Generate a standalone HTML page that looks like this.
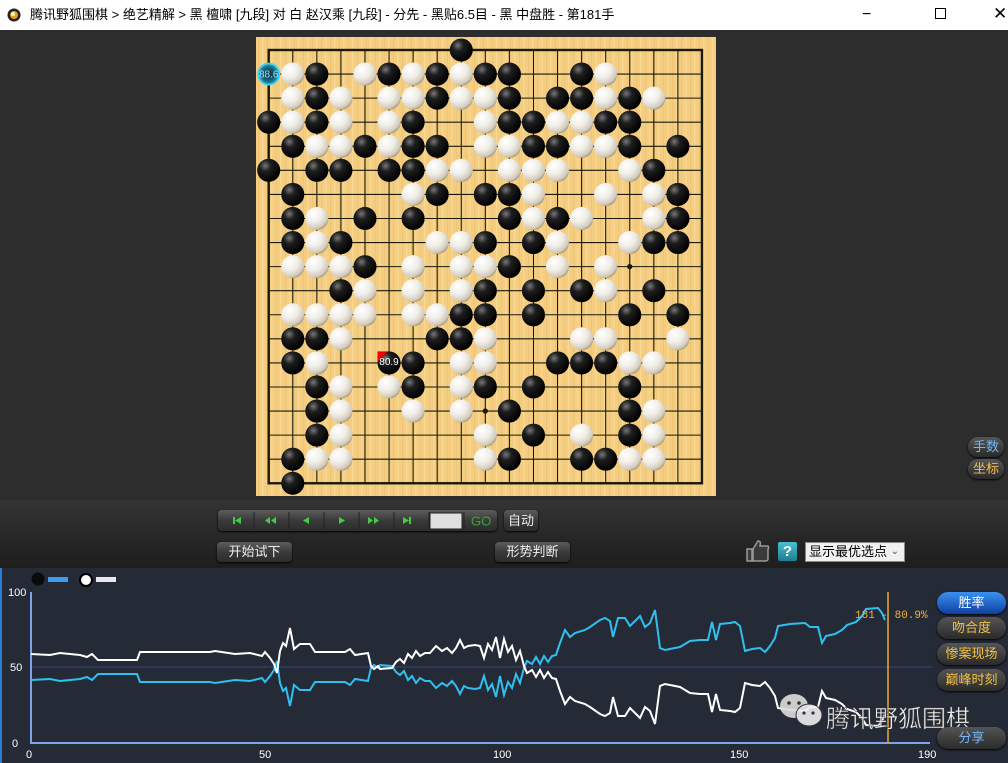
<!DOCTYPE html>
<html><head><meta charset="utf-8"><style>
*{margin:0;padding:0;box-sizing:border-box}
body{width:1008px;height:763px;overflow:hidden;background:#2c2c2c;font-family:"Liberation Sans","Noto Sans CJK SC",sans-serif;position:relative}
.abs{position:absolute}
#title{left:0;top:0;width:1008px;height:30px;background:#fff;font-size:13px;color:#000;line-height:30px}
#main{left:0;top:30px;width:1008px;height:470px;background:#2d2d2d}
#ctrl{left:0;top:500px;width:1008px;height:68px;background:linear-gradient(#343434,#262626 60%,#1e1e1e)}
#chart{left:0;top:568px;width:1008px;height:195px;background:#252a37;border-left:2px solid #2b7fd0}
.btn{position:absolute;background:linear-gradient(#5c5c5c,#3a3a3a 50%,#2c2c2c);border-radius:4px;color:#eee;font-size:13px;text-align:center;box-shadow:0 1px 2px #000}
.rb{position:absolute;border-radius:11px;background:linear-gradient(#555,#2a2a2a);font-size:13px;text-align:center;box-shadow:0 1px 2px #000;color:#f5c243}
</style></head><body>
<div id="title" class="abs">
<svg class="abs" style="left:7px;top:8px" width="14" height="14"><circle cx="7" cy="7" r="6.5" fill="#222"/><circle cx="7" cy="7" r="4" fill="#e8a020"/><circle cx="6" cy="6" r="2" fill="#fff3b0"/></svg>
<span class="abs" style="left:30px;top:0">腾讯野狐围棋 &gt; 绝艺精解 &gt; 黑 檀啸 [九段] 对 白 赵汉乘 [九段] - 分先 - 黑贴6.5目 - 黑 中盘胜 - 第181手</span>
<span class="abs" style="left:862px;top:0;font-size:16px">−</span>
<span class="abs" style="left:935px;top:8px;width:11px;height:11px;border:1px solid #000"></span>
<span class="abs" style="left:993px;top:-1px;font-size:17px">✕</span>
</div>
<div id="main" class="abs"></div>

<svg class="abs" style="left:256px;top:37px" width="460" height="459">
<defs>
<radialGradient id="bk" cx="0.35" cy="0.3" r="0.7"><stop offset="0" stop-color="#777"/><stop offset="0.35" stop-color="#1e1e1e"/><stop offset="1" stop-color="#000"/></radialGradient>
<radialGradient id="wh" cx="0.35" cy="0.3" r="0.75"><stop offset="0" stop-color="#fff"/><stop offset="0.5" stop-color="#f0ede6"/><stop offset="0.85" stop-color="#d2cabb"/><stop offset="1" stop-color="#9d927c"/></radialGradient>
<radialGradient id="mk" cx="0.5" cy="0.5" r="0.5"><stop offset="0" stop-color="#123"/><stop offset="0.7" stop-color="#1b6d80"/><stop offset="1" stop-color="#3ad"/></radialGradient>
<pattern id="wood" width="9" height="10" patternUnits="userSpaceOnUse"><rect width="9" height="10" fill="#f4cd80"/><rect x="2" width="1" height="10" fill="#eec476"/><rect x="6" width="1.5" height="10" fill="#f8d792"/></pattern>
</defs>
<rect width="460" height="459" fill="url(#wood)"/>
<g transform="translate(12.7,13) scale(24.07)">
<g stroke="#1a1a0a" stroke-width="0.045">
<path d="M0 1H18M0 2H18M0 3H18M0 4H18M0 5H18M0 6H18M0 7H18M0 8H18M0 9H18M0 10H18M0 11H18M0 12H18M0 13H18M0 14H18M0 15H18M0 16H18M0 17H18M1 0V18M2 0V18M3 0V18M4 0V18M5 0V18M6 0V18M7 0V18M8 0V18M9 0V18M10 0V18M11 0V18M12 0V18M13 0V18M14 0V18M15 0V18M16 0V18M17 0V18"/>
<rect x="0" y="0" width="18" height="18" fill="none" stroke-width="0.1"/>
</g>
<g fill="#1a1a0a"><circle cx="3" cy="3" r=".11"/><circle cx="9" cy="3" r=".11"/><circle cx="15" cy="3" r=".11"/><circle cx="3" cy="9" r=".11"/><circle cx="9" cy="9" r=".11"/><circle cx="15" cy="9" r=".11"/><circle cx="3" cy="15" r=".11"/><circle cx="9" cy="15" r=".11"/><circle cx="15" cy="15" r=".11"/></g>
<g fill="url(#bk)">
<circle cx="8" cy="0" r=".48"/>
<circle cx="2" cy="1" r=".48"/><circle cx="5" cy="1" r=".48"/><circle cx="7" cy="1" r=".48"/><circle cx="9" cy="1" r=".48"/><circle cx="10" cy="1" r=".48"/><circle cx="13" cy="1" r=".48"/>
<circle cx="2" cy="2" r=".48"/><circle cx="7" cy="2" r=".48"/><circle cx="10" cy="2" r=".48"/><circle cx="12" cy="2" r=".48"/><circle cx="13" cy="2" r=".48"/><circle cx="15" cy="2" r=".48"/>
<circle cx="0" cy="3" r=".48"/><circle cx="2" cy="3" r=".48"/><circle cx="6" cy="3" r=".48"/><circle cx="10" cy="3" r=".48"/><circle cx="11" cy="3" r=".48"/><circle cx="14" cy="3" r=".48"/><circle cx="15" cy="3" r=".48"/>
<circle cx="1" cy="4" r=".48"/><circle cx="4" cy="4" r=".48"/><circle cx="6" cy="4" r=".48"/><circle cx="7" cy="4" r=".48"/><circle cx="11" cy="4" r=".48"/><circle cx="12" cy="4" r=".48"/><circle cx="15" cy="4" r=".48"/><circle cx="17" cy="4" r=".48"/>
<circle cx="0" cy="5" r=".48"/><circle cx="2" cy="5" r=".48"/><circle cx="3" cy="5" r=".48"/><circle cx="5" cy="5" r=".48"/><circle cx="6" cy="5" r=".48"/><circle cx="16" cy="5" r=".48"/>
<circle cx="1" cy="6" r=".48"/><circle cx="7" cy="6" r=".48"/><circle cx="9" cy="6" r=".48"/><circle cx="10" cy="6" r=".48"/><circle cx="17" cy="6" r=".48"/>
<circle cx="1" cy="7" r=".48"/><circle cx="4" cy="7" r=".48"/><circle cx="6" cy="7" r=".48"/><circle cx="10" cy="7" r=".48"/><circle cx="12" cy="7" r=".48"/><circle cx="17" cy="7" r=".48"/>
<circle cx="1" cy="8" r=".48"/><circle cx="3" cy="8" r=".48"/><circle cx="9" cy="8" r=".48"/><circle cx="11" cy="8" r=".48"/><circle cx="16" cy="8" r=".48"/><circle cx="17" cy="8" r=".48"/>
<circle cx="4" cy="9" r=".48"/><circle cx="10" cy="9" r=".48"/>
<circle cx="3" cy="10" r=".48"/><circle cx="9" cy="10" r=".48"/><circle cx="11" cy="10" r=".48"/><circle cx="13" cy="10" r=".48"/><circle cx="16" cy="10" r=".48"/>
<circle cx="8" cy="11" r=".48"/><circle cx="9" cy="11" r=".48"/><circle cx="11" cy="11" r=".48"/><circle cx="15" cy="11" r=".48"/><circle cx="17" cy="11" r=".48"/>
<circle cx="1" cy="12" r=".48"/><circle cx="2" cy="12" r=".48"/><circle cx="7" cy="12" r=".48"/><circle cx="8" cy="12" r=".48"/>
<circle cx="1" cy="13" r=".48"/><circle cx="5" cy="13" r=".48"/><circle cx="6" cy="13" r=".48"/><circle cx="12" cy="13" r=".48"/><circle cx="13" cy="13" r=".48"/><circle cx="14" cy="13" r=".48"/>
<circle cx="2" cy="14" r=".48"/><circle cx="6" cy="14" r=".48"/><circle cx="9" cy="14" r=".48"/><circle cx="11" cy="14" r=".48"/><circle cx="15" cy="14" r=".48"/>
<circle cx="2" cy="15" r=".48"/><circle cx="10" cy="15" r=".48"/><circle cx="15" cy="15" r=".48"/>
<circle cx="2" cy="16" r=".48"/><circle cx="11" cy="16" r=".48"/><circle cx="15" cy="16" r=".48"/>
<circle cx="1" cy="17" r=".48"/><circle cx="10" cy="17" r=".48"/><circle cx="13" cy="17" r=".48"/><circle cx="14" cy="17" r=".48"/>
<circle cx="1" cy="18" r=".48"/>
</g>
<g fill="url(#wh)">
<circle cx="1" cy="1" r=".48"/><circle cx="4" cy="1" r=".48"/><circle cx="6" cy="1" r=".48"/><circle cx="8" cy="1" r=".48"/><circle cx="14" cy="1" r=".48"/>
<circle cx="1" cy="2" r=".48"/><circle cx="3" cy="2" r=".48"/><circle cx="5" cy="2" r=".48"/><circle cx="6" cy="2" r=".48"/><circle cx="8" cy="2" r=".48"/><circle cx="9" cy="2" r=".48"/><circle cx="14" cy="2" r=".48"/><circle cx="16" cy="2" r=".48"/>
<circle cx="1" cy="3" r=".48"/><circle cx="3" cy="3" r=".48"/><circle cx="5" cy="3" r=".48"/><circle cx="9" cy="3" r=".48"/><circle cx="12" cy="3" r=".48"/><circle cx="13" cy="3" r=".48"/>
<circle cx="2" cy="4" r=".48"/><circle cx="3" cy="4" r=".48"/><circle cx="5" cy="4" r=".48"/><circle cx="9" cy="4" r=".48"/><circle cx="10" cy="4" r=".48"/><circle cx="13" cy="4" r=".48"/><circle cx="14" cy="4" r=".48"/>
<circle cx="7" cy="5" r=".48"/><circle cx="8" cy="5" r=".48"/><circle cx="10" cy="5" r=".48"/><circle cx="11" cy="5" r=".48"/><circle cx="12" cy="5" r=".48"/><circle cx="15" cy="5" r=".48"/>
<circle cx="6" cy="6" r=".48"/><circle cx="11" cy="6" r=".48"/><circle cx="14" cy="6" r=".48"/><circle cx="16" cy="6" r=".48"/>
<circle cx="2" cy="7" r=".48"/><circle cx="11" cy="7" r=".48"/><circle cx="13" cy="7" r=".48"/><circle cx="16" cy="7" r=".48"/>
<circle cx="2" cy="8" r=".48"/><circle cx="7" cy="8" r=".48"/><circle cx="8" cy="8" r=".48"/><circle cx="12" cy="8" r=".48"/><circle cx="15" cy="8" r=".48"/>
<circle cx="1" cy="9" r=".48"/><circle cx="2" cy="9" r=".48"/><circle cx="3" cy="9" r=".48"/><circle cx="6" cy="9" r=".48"/><circle cx="8" cy="9" r=".48"/><circle cx="9" cy="9" r=".48"/><circle cx="12" cy="9" r=".48"/><circle cx="14" cy="9" r=".48"/>
<circle cx="4" cy="10" r=".48"/><circle cx="6" cy="10" r=".48"/><circle cx="8" cy="10" r=".48"/><circle cx="14" cy="10" r=".48"/>
<circle cx="1" cy="11" r=".48"/><circle cx="2" cy="11" r=".48"/><circle cx="3" cy="11" r=".48"/><circle cx="4" cy="11" r=".48"/><circle cx="6" cy="11" r=".48"/><circle cx="7" cy="11" r=".48"/>
<circle cx="3" cy="12" r=".48"/><circle cx="9" cy="12" r=".48"/><circle cx="13" cy="12" r=".48"/><circle cx="14" cy="12" r=".48"/><circle cx="17" cy="12" r=".48"/>
<circle cx="2" cy="13" r=".48"/><circle cx="8" cy="13" r=".48"/><circle cx="9" cy="13" r=".48"/><circle cx="15" cy="13" r=".48"/><circle cx="16" cy="13" r=".48"/>
<circle cx="3" cy="14" r=".48"/><circle cx="5" cy="14" r=".48"/><circle cx="8" cy="14" r=".48"/>
<circle cx="3" cy="15" r=".48"/><circle cx="6" cy="15" r=".48"/><circle cx="8" cy="15" r=".48"/><circle cx="16" cy="15" r=".48"/>
<circle cx="3" cy="16" r=".48"/><circle cx="9" cy="16" r=".48"/><circle cx="13" cy="16" r=".48"/><circle cx="16" cy="16" r=".48"/>
<circle cx="2" cy="17" r=".48"/><circle cx="3" cy="17" r=".48"/><circle cx="9" cy="17" r=".48"/><circle cx="15" cy="17" r=".48"/><circle cx="16" cy="17" r=".48"/>
</g>
<circle cx="0" cy="1" r=".44" fill="url(#mk)" stroke="#3cd4f4" stroke-width=".07"/>
<path d="M4.52 12.52H4.95L4.52 12.95Z" fill="#e00"/>
</g>
<text x="12.7" y="40.5" font-size="10" fill="#8ee8ff" text-anchor="middle" font-family="Liberation Sans">88.6</text>
<text x="133" y="328" font-size="10" fill="#fff" text-anchor="middle" font-family="Liberation Sans">80.9</text>
</svg>

<div id="ctrl" class="abs"></div>
<div class="btn" style="left:218px;top:510px;width:279px;height:21px"></div>
<svg class="abs" style="left:218px;top:510px" width="279" height="21" fill="#4c4">
<g stroke="#222" stroke-width="1"><path d="M36 2V19M71 2V19M106 2V19M141 2V19M176 2V19M211 2V19M246 2V19"/></g>
<path d="M15 7h2v7h-2zM23 7v7l-6-3.5z"/>
<path d="M52 7v7l-5-3.5zM58 7v7l-5-3.5z"/>
<path d="M91 7v7l-6-3.5z"/>
<path d="M121 7v7l6-3.5z"/>
<path d="M150 7v7l5-3.5zM156 7v7l5-3.5z"/>
<path d="M185 7v7l6-3.5zM191 7h2v7h-2z"/>
<rect x="212" y="3" width="32" height="16" fill="#e0e0e0" stroke="#222"/>
<text x="253" y="15.5" font-size="13" font-family="Liberation Sans" fill="#3a3">GO</text>
</svg>
<div class="btn" style="left:504px;top:510px;width:34px;height:21px;line-height:21px">自动</div>
<div class="btn" style="left:217px;top:542px;width:75px;height:20px;line-height:20px">开始试下</div>
<div class="btn" style="left:495px;top:542px;width:75px;height:20px;line-height:20px">形势判断</div>
<svg class="abs" style="left:745px;top:539px" width="26" height="24"><path d="M2 10h5v12H2zM8 10l5-8c2 0 3 1 2 5h7c2 0 2 2 1 3v10c0 1-1 2-2 2H8z" fill="#3a3a3a" stroke="#999" stroke-width="1.5"/></svg>
<div class="abs" style="left:778px;top:542px;width:19px;height:19px;background:linear-gradient(#4ac0d0,#1d7d90);border-radius:2px;color:#fff;font-weight:bold;font-size:15px;text-align:center;line-height:19px">?</div>
<div class="abs" style="left:805px;top:542px;width:100px;height:20px;background:#f0f0f0;border:1px solid #888;font-size:13px;line-height:18px;padding-left:3px;color:#000">显示最优选点<span style="position:absolute;right:5px;top:0;color:#555;font-size:10px">⌄</span></div>
<div class="rb" style="left:968px;top:437px;width:36px;height:20px;line-height:20px;color:#6fb8ff">手数</div>
<div class="rb" style="left:968px;top:459px;width:36px;height:20px;line-height:20px">坐标</div>

<div id="chart" class="abs"></div>
<svg class="abs" style="left:0;top:568px" width="1008" height="195">
<g transform="translate(0,-568)">
<circle cx="38" cy="579" r="6.5" fill="#0a0a0a"/><rect x="48" y="577" width="20" height="5" fill="#3c9ef0"/>
<circle cx="86" cy="580" r="6" fill="#fff" stroke="#000" stroke-width="2"/><rect x="96" y="577" width="20" height="5" fill="#e8e8e8"/>
<line x1="31" y1="667" x2="932" y2="667" stroke="#3a4677" stroke-width="1"/>
<path d="M31 592V743H930" fill="none" stroke="#7fa4e8" stroke-width="2"/>
<polyline id="bl" fill="none" stroke="#2fc0f0" stroke-width="2" points="31,680 50,679 60,681 80,679 87,677 92,680 98,674 137,674 140,682 210,682 215,683 235,680 250,681 262,678 265,682 270,676 274,670 277,661 280,683 283,691 286,688 290,706 294,685 300,690 310,690 315,682 330,682 345,682 350,685 355,679 368,681 371,668 374,665 378,668 380,665 392,666 396,672 400,675 404,671 408,680 412,676 416,683 420,678 425,681 430,681 436,688 442,683 447,686 452,681 456,686 460,694 464,686 468,688 475,689 480,688 484,676 488,690 492,684 496,697 500,676 504,695 508,682 512,688 516,674 520,683 524,668 527,661 532,664 536,657 540,664 544,656 548,662 552,656 556,655 560,643 565,630 570,637 575,633 585,630 590,627 600,620 605,618 610,621 613,637 618,618 625,618 630,626 635,621 640,616 645,627 650,623 655,610 660,648 665,650 670,649 680,647 690,641 700,640 708,640 712,622 716,640 720,624 730,623 735,622 740,626 745,651 752,649 760,648 765,652 770,646 775,638 778,626 790,624 805,623 810,627 818,627 822,643 826,636 835,634 842,630 847,625 856,622 862,616 866,609 878,608 882,613 885,620"/>
<g transform="matrix(1,0,0,-1,0,1334)"><polyline fill="none" stroke="#fff" stroke-width="2" points="31,680 50,679 60,681 80,679 87,677 92,680 98,674 137,674 140,682 210,682 215,683 235,680 250,681 262,678 265,682 270,676 274,670 277,661 280,683 283,691 286,688 290,706 294,685 300,690 310,690 315,682 330,682 345,682 350,685 355,679 368,681 371,668 374,665 378,668 380,665 392,666 396,672 400,675 404,671 408,680 412,676 416,683 420,678 425,681 430,681 436,688 442,683 447,686 452,681 456,686 460,694 464,686 468,688 475,689 480,688 484,676 488,690 492,684 496,697 500,676 504,695 508,682 512,688 516,674 520,683 524,668 527,661 532,664 536,657 540,664 544,656 548,662 552,656 556,655 560,643 565,630 570,637 575,633 585,630 590,627 600,620 605,618 610,621 613,637 618,618 625,618 630,626 635,621 640,616 645,627 650,623 655,610 660,648 665,650 670,649 680,647 690,641 700,640 708,640 712,622 716,640 720,624 730,623 735,622 740,626 745,651 752,649 760,648 765,652 770,646 775,638 778,626 790,624 805,623 810,627 818,627 822,643 826,636 835,634 842,630 847,625 856,622 862,616 866,609 878,608 882,613 885,620"/></g>
<line x1="888" y1="592" x2="888" y2="743" stroke="#f0a830" stroke-width="1.5"/>
<text x="855" y="618" font-size="11" fill="#f0b040" font-family="Liberation Mono">181 - 80.9%</text>
<g font-family="Liberation Sans" font-size="11" fill="#fff">
<text x="8" y="596">100</text><text x="10" y="671">50</text><text x="12" y="747">0</text>
<text x="26" y="758">0</text><text x="259" y="758">50</text><text x="493" y="758">100</text><text x="730" y="758">150</text><text x="918" y="758">190</text>
</g>
<g opacity="0.9">
<ellipse cx="794" cy="706" rx="14" ry="12" fill="#ddd"/>
<ellipse cx="809" cy="715" rx="13" ry="11" fill="#eee" stroke="#333" stroke-width="1"/>
<circle cx="789" cy="703" r="1.8" fill="#333"/><circle cx="799" cy="703" r="1.8" fill="#333"/>
<circle cx="804" cy="713" r="1.6" fill="#333"/><circle cx="813" cy="713" r="1.6" fill="#333"/>
</g>
<text x="826" y="727" font-size="24" fill="#eee" stroke="#333" stroke-width="0.5" font-family="Liberation Sans,Noto Sans CJK SC,sans-serif">腾讯野狐围棋</text>
</g>
</svg>
<div class="rb" style="left:937px;top:592px;width:69px;height:22px;line-height:22px;background:linear-gradient(#3a90f0,#1040a0);color:#fff">胜率</div>
<div class="rb" style="left:937px;top:617px;width:69px;height:22px;line-height:22px">吻合度</div>
<div class="rb" style="left:937px;top:643px;width:69px;height:22px;line-height:22px">惨案现场</div>
<div class="rb" style="left:937px;top:669px;width:69px;height:22px;line-height:22px">巅峰时刻</div>
<div class="rb" style="left:937px;top:727px;width:69px;height:22px;line-height:22px;color:#6fb8ff">分享</div>
</body></html>
